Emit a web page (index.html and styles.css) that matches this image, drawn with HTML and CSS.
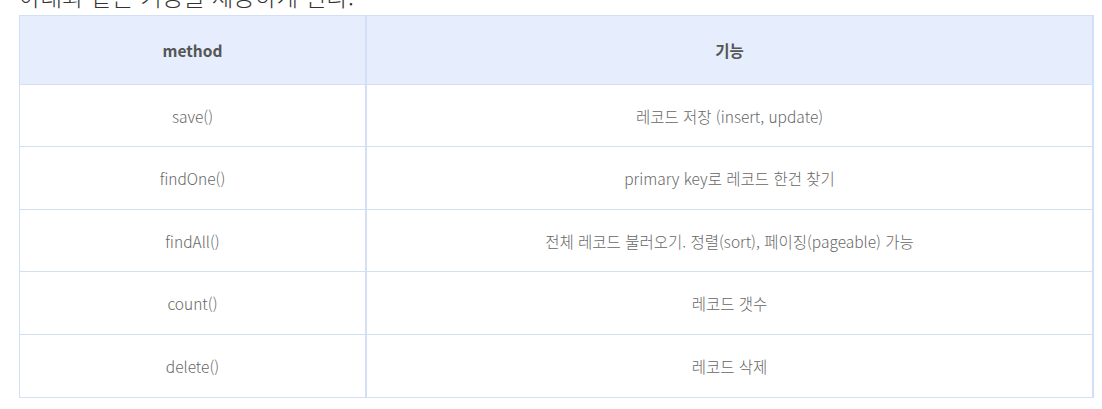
FILE: index.html
```html
<!DOCTYPE html>
<html lang="ko">
<head>
<meta charset="utf-8">
<link rel="stylesheet" href="styles.css">
</head>
<body>
<div class="content">
  <p class="lead">아래와 같은 기능을 제공하게 된다.</p>
  <table class="methods">
    <thead>
      <tr><th class="col-method">method</th><th class="col-desc">기능</th></tr>
    </thead>
    <tbody>
      <tr><td class="col-method">save()</td><td class="col-desc">레코드 저장 (insert, update)</td></tr>
      <tr><td class="col-method">findOne()</td><td class="col-desc">primary key로 레코드 한건 찾기</td></tr>
      <tr><td class="col-method">findAll()</td><td class="col-desc">전체 레코드 불러오기. 정렬(sort), 페이징(pageable) 가능</td></tr>
      <tr><td class="col-method">count()</td><td class="col-desc">레코드 갯수</td></tr>
      <tr><td class="col-method">delete()</td><td class="col-desc">레코드 삭제</td></tr>
    </tbody>
  </table>
</div>
</body>
</html>
```
FILE: styles.css
```css
html, body {
  margin: 0;
  padding: 0;
  background: #fff;
}
body {
  font-family: "Noto Sans CJK KR", "Noto Sans", sans-serif;
  color: #666;
  overflow: hidden;
}
.content {
  padding-left: 19px;
  width: 1075px;
}
.lead {
  margin: -20px 0 3px;
  font-size: 23.5px;
  line-height: 32px;
  height: 32px;
  color: #333;
  font-weight: 300;
}
.methods {
  width: 1075px;
  border-collapse: collapse;
  table-layout: fixed;
  font-size: 15.5px;
}
.methods th, .methods td {
  border: 1px solid #d3dff7;
  text-align: center;
  vertical-align: middle;
  padding: 0;
}
.methods th {
  background: #e6edfc;
  color: #555;
  font-weight: bold;
  height: 68px;
}
.methods td {
  height: 61px;
  font-weight: 300;
  color: #666;
}
.methods tbody tr:nth-child(even) td,
.methods tbody tr:last-child td {
  height: 62px;
}
.methods .col-method {
  width: 345px;
  border-right: 2px solid #d3dff7;
}
.methods .col-desc {
  border-right: 2px solid #d3dff7;
}
```
